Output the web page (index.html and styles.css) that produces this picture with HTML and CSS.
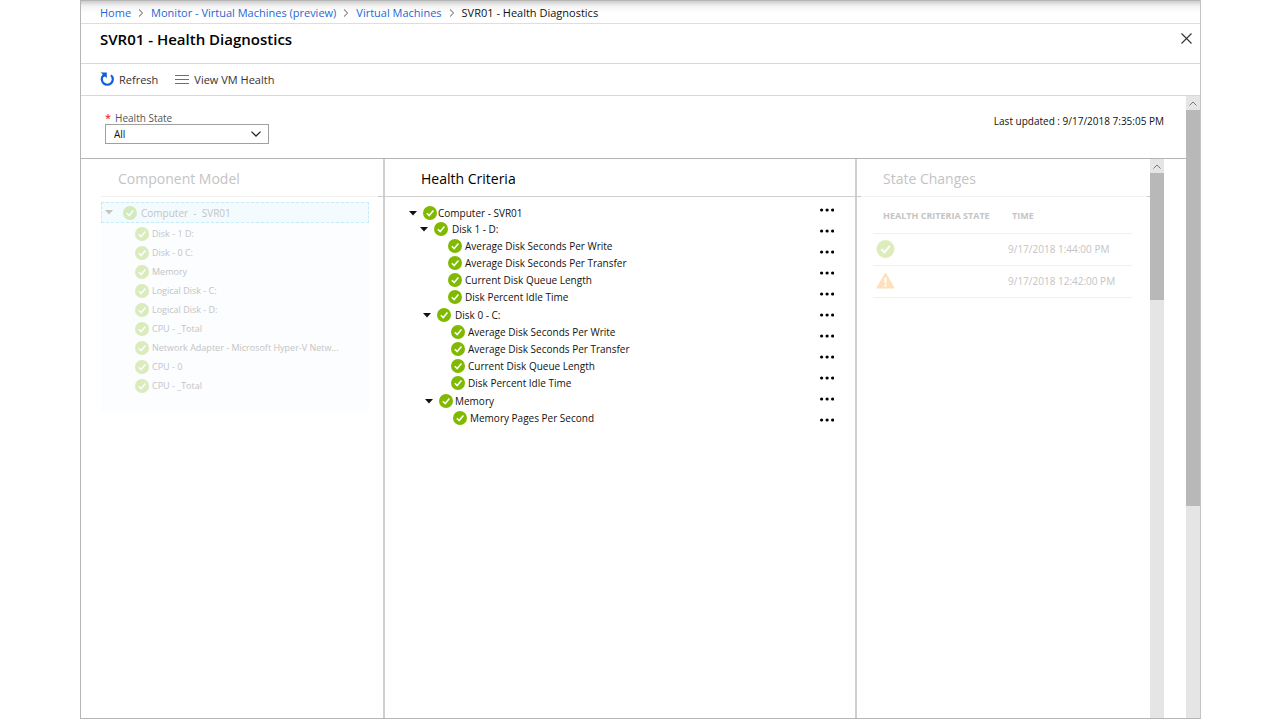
FILE: index.html
```
<!DOCTYPE html>
<html lang="en">
<head>
<meta charset="utf-8">
<title>SVR01 - Health Diagnostics</title>
<link rel="stylesheet" href="styles.css">
</head>
<body>
<svg class="sprite" aria-hidden="true">
  <symbol id="ok" viewBox="0 0 14 14"><circle cx="7" cy="7" r="7" fill="#7fba00"/><path d="M3.8 7.2 6.2 9.6 10.4 4.6" fill="none" stroke="#fff" stroke-width="1.6"/></symbol>
  <symbol id="warn" viewBox="0 0 20 18"><path d="M10 1.6 18.4 16H1.6Z" fill="#ff8c00" stroke="#ff8c00" stroke-width="2" stroke-linejoin="round"/><path d="M10 5.4V11.4M10 12.8V15" stroke="#fff" stroke-width="2.2"/></symbol>
  <symbol id="caret" viewBox="0 0 8 5"><path d="M0 0H8L4 4.6Z" fill="currentColor"/></symbol>
  <symbol id="dots" viewBox="0 0 14 4"><circle cx="1.6" cy="2" r="1.6"/><circle cx="7.1" cy="2" r="1.6"/><circle cx="12.6" cy="2" r="1.6"/></symbol>
  <symbol id="next" viewBox="0 0 6 8"><path d="M1 .5 4.6 4 1 7.5" fill="none" stroke="#555" stroke-width="1"/></symbol>
  <symbol id="up" viewBox="0 0 8 5"><path d="M.5 4.5 4 1 7.5 4.5" fill="none" stroke="#777" stroke-width="1"/></symbol>
</svg>
<div class="window">
  <nav class="crumbs" aria-label="Breadcrumb">
    <a href="#">Home</a><svg><use href="#next"/></svg>
    <a href="#">Monitor - Virtual Machines (preview)</a><svg><use href="#next"/></svg>
    <a href="#">Virtual Machines</a><svg><use href="#next"/></svg>
    <span>SVR01 - Health Diagnostics</span>
  </nav>
  <header class="title">
    <h1>SVR01 - Health Diagnostics</h1>
    <button class="close" aria-label="Close"><svg viewBox="0 0 11 11"><path d="M.5.5 10.5 10.5M10.5.5.5 10.5" stroke="#333" stroke-width="1.1"/></svg></button>
  </header>
  <div class="toolbar">
    <button><svg class="refresh" viewBox="0 0 14 15"><path d="M11 3.2A5.5 5.5 0 1 1 3.2 3.6" fill="none" stroke="#0f5fd8" stroke-width="2.2"/><path d="M.6.4H6.8V6.2L5 4.4 3 5.2 2.6 2.2Z" fill="#0f5fd8"/></svg>Refresh</button>
    <button><svg class="list" viewBox="0 0 14 9"><path d="M0 0H14V1H0ZM0 4H14V5H0ZM0 8H14V9H0Z" fill="#2a7bf0"/></svg>View VM Health</button>
  </div>
  <div class="body">
    <main class="content">
      <section class="filter">
        <div class="field">
          <label for="state"><span class="star">*</span>Health State</label>
          <div class="select">
            <select id="state"><option>All</option></select>
            <svg viewBox="0 0 10 6"><path d="M.5.6 5 5 9.5.6" fill="none" stroke="#222" stroke-width="1.3"/></svg>
          </div>
        </div>
        <p>Last updated : 9/17/2018 7:35:05 PM</p>
      </section>
      <div class="panels">
        <section class="panel model">
          <h2>Component Model</h2>
          <div class="modelbox">
            <div class="root"><button class="toggle" aria-label="Collapse"><svg><use href="#caret"/></svg></button><svg class="ok"><use href="#ok"/></svg>Computer&nbsp; - &nbsp;SVR01</div>
            <ul class="parts">
              <li><svg class="ok"><use href="#ok"/></svg>Disk - 1 D:</li>
              <li><svg class="ok"><use href="#ok"/></svg>Disk - 0 C:</li>
              <li><svg class="ok"><use href="#ok"/></svg>Memory</li>
              <li><svg class="ok"><use href="#ok"/></svg>Logical Disk - C:</li>
              <li><svg class="ok"><use href="#ok"/></svg>Logical Disk - D:</li>
              <li><svg class="ok"><use href="#ok"/></svg>CPU - _Total</li>
              <li><svg class="ok"><use href="#ok"/></svg>Network Adapter - Microsoft Hyper-V Netw...</li>
              <li><svg class="ok"><use href="#ok"/></svg>CPU - 0</li>
              <li><svg class="ok"><use href="#ok"/></svg>CPU - _Total</li>
            </ul>
          </div>
        </section>
        <section class="panel criteria">
          <h2>Health Criteria</h2>
          <div class="criteriabody">
            <div class="tree">
              <div class="node"><button class="toggle" aria-label="Collapse"><svg><use href="#caret"/></svg></button><svg class="ok"><use href="#ok"/></svg>Computer - SVR01</div>
              <div class="group first">
                <div class="node"><button class="toggle" aria-label="Collapse"><svg><use href="#caret"/></svg></button><svg class="ok"><use href="#ok"/></svg>Disk 1 - D:</div>
                <ul>
                  <li><svg class="ok"><use href="#ok"/></svg>Average Disk Seconds Per Write</li>
                  <li><svg class="ok"><use href="#ok"/></svg>Average Disk Seconds Per Transfer</li>
                  <li><svg class="ok"><use href="#ok"/></svg>Current Disk Queue Length</li>
                  <li><svg class="ok"><use href="#ok"/></svg>Disk Percent Idle Time</li>
                </ul>
              </div>
              <div class="group second">
                <div class="node"><button class="toggle" aria-label="Collapse"><svg><use href="#caret"/></svg></button><svg class="ok"><use href="#ok"/></svg>Disk 0 - C:</div>
                <ul>
                  <li><svg class="ok"><use href="#ok"/></svg>Average Disk Seconds Per Write</li>
                  <li><svg class="ok"><use href="#ok"/></svg>Average Disk Seconds Per Transfer</li>
                  <li><svg class="ok"><use href="#ok"/></svg>Current Disk Queue Length</li>
                  <li><svg class="ok"><use href="#ok"/></svg>Disk Percent Idle Time</li>
                </ul>
              </div>
              <div class="group third">
                <div class="node"><button class="toggle" aria-label="Collapse"><svg><use href="#caret"/></svg></button><svg class="ok"><use href="#ok"/></svg>Memory</div>
                <ul>
                  <li><svg class="ok"><use href="#ok"/></svg>Memory Pages Per Second</li>
                </ul>
              </div>
            </div>
            <div class="menus">
              <button aria-label="More"><svg><use href="#dots"/></svg></button>
              <button aria-label="More"><svg><use href="#dots"/></svg></button>
              <button aria-label="More"><svg><use href="#dots"/></svg></button>
              <button aria-label="More"><svg><use href="#dots"/></svg></button>
              <button aria-label="More"><svg><use href="#dots"/></svg></button>
              <button aria-label="More"><svg><use href="#dots"/></svg></button>
              <button aria-label="More"><svg><use href="#dots"/></svg></button>
              <button aria-label="More"><svg><use href="#dots"/></svg></button>
              <button aria-label="More"><svg><use href="#dots"/></svg></button>
              <button aria-label="More"><svg><use href="#dots"/></svg></button>
              <button aria-label="More"><svg><use href="#dots"/></svg></button>
            </div>
          </div>
        </section>
        <section class="panel changes">
          <h2>State Changes</h2>
          <table>
            <thead><tr><th class="state">HEALTH CRITERIA STATE</th><th>TIME</th></tr></thead>
            <tbody>
              <tr><td><svg class="big"><use href="#ok"/></svg></td><td>9/17/2018 1:44:00 PM</td></tr>
              <tr><td><svg class="big"><use href="#warn"/></svg></td><td>9/17/2018 12:42:00 PM</td></tr>
            </tbody>
          </table>
        </section>
        <div class="scroll inner"><div class="arrow"><svg><use href="#up"/></svg></div><div class="thumb"></div></div>
      </div>
    </main>
    <div class="scroll outer"><div class="arrow"><svg><use href="#up"/></svg></div><div class="thumb"></div></div>
  </div>
</div>
</body>
</html>
```
FILE: styles.css
```
* { box-sizing: border-box; }
body {
  margin: 0;
  background: #fff;
  color: #111;
  font: 11px/16px "Open Sans", "Noto Sans", sans-serif;
}
h1, h2, p, ul { margin: 0; padding: 0; }
ul { list-style: none; }
svg { display: block; flex: none; }
button {
  display: flex;
  align-items: center;
  padding: 0;
  border: 0;
  background: none;
  color: inherit;
  font: inherit;
}
.sprite { position: absolute; width: 0; height: 0; }

.window {
  display: flex;
  flex-direction: column;
  min-height: calc(100vh - 1px);
  margin: 0 79px 0 80px;
  border: 1px solid #b5b5b5;
  border-right-color: #c4c4c4;
}
.crumbs {
  display: flex;
  align-items: center;
  gap: 7px;
  height: 23px;
  padding: 2px 0 0 19px;
  border-bottom: 1px solid #dedede;
  background: linear-gradient(#ccc, #f3f3f3 5px, #fff 12px);
}
.crumbs a { color: #1f66d6; text-decoration: none; }
.crumbs svg { width: 6px; height: 8px; }
.title {
  display: flex;
  justify-content: space-between;
  align-items: flex-start;
  height: 40px;
  padding: 4px 8px 0 19px;
  border-bottom: 1px solid #d8d8d8;
}
.title h1 { font-size: 15px; line-height: 22px; font-weight: 600; color: #000; }
.close { height: 20px; }
.close svg { width: 11px; height: 11px; }
.toolbar {
  display: flex;
  gap: 17px;
  height: 32px;
  padding-left: 19px;
  border-bottom: 1px solid #d8d8d8;
  color: #333;
}
.toolbar button { gap: 5px; }
.refresh { width: 14px; height: 15px; }
.list { width: 14px; height: 9px; }

.body { display: flex; flex: 1; }
.content { display: flex; flex: 1; flex-direction: column; }
.filter {
  display: flex;
  justify-content: space-between;
  height: 63px;
  padding: 14px 22px 0 24px;
  border-bottom: 1px solid #b4b4b4;
}
.filter label { display: flex; gap: 4px; height: 14px; font-size: 10px; color: #555; }
.star { color: #e00; font-size: 11px; }
.filter p { padding-top: 3px; font-size: 10px; }
.select { position: relative; width: 164px; }
.select select {
  display: block;
  width: 100%;
  height: 20px;
  padding: 0 8px;
  border: 1px solid #a0a0a0;
  border-radius: 0;
  background: #fff;
  color: #111;
  font: inherit;
  font-size: 10px;
  appearance: none;
}
.select svg {
  position: absolute;
  top: 7px;
  right: 8px;
  width: 10px;
  height: 6px;
  pointer-events: none;
}

.panels { display: flex; flex: 1; padding-right: 22px; }
.panel h2 { height: 38px; padding-top: 9px; font-size: 14px; line-height: 22px; font-weight: 400; }
.model { flex: 302; border-right: 2px solid #cfcfcf; }
.criteria { flex: 470; border-right: 2px solid #cfcfcf; }
.changes { flex: 293; }

.model h2 {
  margin-left: 20px;
  padding-left: 17px;
  background: linear-gradient(to left, #ccc 5px, #f1f1f1 5px) bottom / 100% 1px no-repeat;
  color: #c4c4c4;
}
.modelbox { height: 210px; margin: 5px 14px 0 20px; background: #fbfdff; color: #c4c4c4; font-size: 9px; }
.root {
  display: flex;
  align-items: center;
  height: 21px;
  padding-left: 3px;
  border: 1px dashed #c5ebf9;
  background: #f3fbff;
  font-size: 10px;
}
.root .toggle { margin-right: 10px; }
.root .ok { margin-right: 4px; }
.toggle svg { width: 8px; height: 5px; }
.ok { width: 14px; height: 14px; }
.modelbox .ok, .changes .big { opacity: 0.26; }
.parts { padding: 1px 0 0 34px; }
.parts li { display: flex; align-items: center; gap: 3px; height: 19px; white-space: nowrap; }

.criteria h2 { padding-left: 36px; border-bottom: 1px solid #cfcfcf; color: #000; }
.criteriabody { display: flex; justify-content: space-between; padding: 2px 21px 0 24px; }
.tree { padding-top: 6px; font-size: 10px; }
.node { display: flex; align-items: center; gap: 1px; height: 16px; white-space: nowrap; }
.node .toggle { margin-right: 5px; }
.group .node { gap: 4px; }
.group .node .toggle { margin-right: 2px; }
.first { padding-left: 11px; }
.second { padding: 2px 0 0 14px; }
.third { padding: 2px 0 0 16px; }
.group.third .node { gap: 2px; }
.group.third .toggle { margin-right: 4px; }
.group ul { padding-left: 28px; }
.group li { display: flex; align-items: center; gap: 3px; height: 17px; white-space: nowrap; }
.menus button { height: 21px; }
.menus svg { width: 14px; height: 4px; }

.changes h2 {
  padding-left: 26px;
  background:
    linear-gradient(to right, #ccc 4px, transparent 4px) bottom / 100% 1px no-repeat,
    linear-gradient(to left, #ccc 3px, #f1f1f1 3px) bottom / 100% 1px no-repeat;
  color: #c4c4c4;
}
.changes table {
  width: calc(100% - 34px);
  margin-left: 16px;
  border-collapse: collapse;
  color: #c4c4c4;
  font-size: 10px;
}
.changes th {
  height: 36px;
  padding: 2px 0 0 4px;
  border-bottom: 1px solid #f1f1f1;
  font-size: 9px;
  font-weight: 700;
  text-align: left;
}
.changes .state { width: 135px; padding-left: 10px; white-space: nowrap; }
.changes td { height: 32px; padding: 0; border-bottom: 1px solid #f1f1f1; }
.changes .big { width: 19px; height: 18px; margin-left: 3px; }

.scroll { width: 14px; background: #e5e5e5; }
.arrow { display: flex; align-items: center; justify-content: center; height: 14px; }
.arrow svg { width: 8px; height: 5px; }
.thumb { background: #b8b8b8; }
.inner .thumb { height: 127px; }
.outer .thumb { height: 396px; }
```
